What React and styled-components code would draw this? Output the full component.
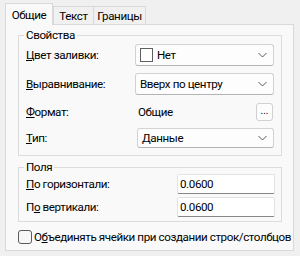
import React from "react";
import styled, { createGlobalStyle } from "styled-components";

const GlobalStyle = createGlobalStyle`
  html, body {
    margin: 0;
    padding: 0;
    background: #f0f0f0;
  }
  body {
    font-family: Roboto, "Liberation Sans", Arial, sans-serif;
    font-size: 11.6px;
    letter-spacing: -0.4px;
    color: #000;
  }
`;

const Window = styled.div`
  width: 300px;
  height: 256px;
  box-sizing: border-box;
  padding: 3px 6px 0 5px;
  background: #f0f0f0;
`;

const TabStrip = styled.div`
  display: flex;
  align-items: flex-end;
  height: 21px;
  position: relative;
  z-index: 1;
`;

const Tab = styled.div`
  box-sizing: border-box;
  width: ${(p) => p.$w}px;
  height: ${(p) => (p.$active ? 22 : 18)}px;
  margin-bottom: ${(p) => (p.$active ? -1 : 0)}px;
  margin-left: ${(p) => (p.$first ? 0 : -1)}px;
  display: flex;
  align-items: center;
  justify-content: center;
  padding-top: ${(p) => (p.$active ? 1 : 0)}px;
  border: 1px solid #d9d9d9;
  border-bottom: none;
  background: ${(p) => (p.$active ? "#f9f9f9" : "#f0f0f0")};
`;

const Panel = styled.div`
  box-sizing: border-box;
  width: 289px;
  height: 227px;
  border: 1px solid #d9d9d9;
  background: #f9f9f9;
  padding: 0 11px 0 12px;
  display: flex;
  flex-direction: column;
`;

const Group = styled.fieldset`
  margin: ${(p) => p.$top}px 0 0 0;
  border: 1px solid #dcdcdc;
  padding: ${(p) => p.$pad};
  min-width: 0;

  legend {
    padding: 0 2px;
    margin-left: -2px;
    line-height: 14px;
    height: 14px;
  }
`;

const Grid = styled.div`
  display: grid;
  grid-template-columns: ${(p) => p.$cols};
  row-gap: ${(p) => p.$gap}px;
  align-items: center;
`;

const Label = styled.div`
  height: ${(p) => p.$h}px;
  display: flex;
  align-items: center;
  white-space: nowrap;

  u {
    text-underline-offset: 1px;
  }
`;

const Combo = styled.div`
  box-sizing: border-box;
  height: ${(p) => p.$h}px;
  margin-left: ${(p) => p.$shift || 0}px;
  display: flex;
  align-items: center;
  padding: 0 6px 0 4px;
  gap: 4px;
  background: #fdfdfd;
  border: 1px solid #d2d2d2;
  border-bottom-color: #b4b4b4;
  border-radius: 3px;

  span {
    flex: 1;
    white-space: nowrap;
  }
`;

const Swatch = styled.div`
  box-sizing: border-box;
  flex-shrink: 0;
  width: 13px;
  height: 14px;
  border: 1px solid #5f5f5f;
  background: #fff;
`;

const FormatCell = styled.div`
  height: 19px;
  display: flex;
  align-items: center;
  justify-content: space-between;
  padding-left: 3px;
`;

const DotsButton = styled.div`
  box-sizing: border-box;
  width: 17px;
  height: 18px;
  margin-right: 1px;
  display: flex;
  align-items: center;
  justify-content: center;
  font-size: 10px;
  letter-spacing: 0;
  padding-bottom: 3px;
  background: #fdfdfd;
  border: 1px solid #d0d0d0;
  border-radius: 3px;
`;

const TextBox = styled.div`
  box-sizing: border-box;
  height: 20px;
  display: flex;
  align-items: center;
  padding: 0 3px 0 2px;
  background: #fff;
  border: 1px solid #e3e3e3;
  border-bottom: 1px solid #868686;
  border-radius: 2px;
`;

const CheckRow = styled.div`
  margin-top: 8px;
  display: flex;
  align-items: center;
  gap: 2px;
  white-space: nowrap;

  u {
    text-underline-offset: 1px;
  }
`;

const CheckBox = styled.div`
  box-sizing: border-box;
  flex-shrink: 0;
  width: 14px;
  height: 14px;
  border: 1px solid #5a5a5a;
  border-radius: 3px;
  background: #f7f7f7;
`;

const Chevron = () => (
  <svg width="9" height="6" viewBox="0 0 9 6">
    <path d="M0.5 1 L4.5 5 L8.5 1" fill="none" stroke="#5c5c5c" strokeWidth="1" />
  </svg>
);

const App = () => {
  return (
    <>
      <GlobalStyle />
      <Window>
        <TabStrip>
          <Tab $active $first $w={48}>Общие</Tab>
          <Tab $w={41} style={{ marginLeft: 0 }}>Текст</Tab>
          <Tab $w={53}>Границы</Tab>
        </TabStrip>
        <Panel>
          <Group $top={3} $pad="2px 7px 7px 7px">
            <legend>Свойства</legend>
            <Grid $cols="109px 139px" $gap={7}>
              <Label $h={22}>
                <span><u>Ц</u>вет заливки:</span>
              </Label>
              <Combo $h={22}>
                <Swatch />
                <span>Нет</span>
                <Chevron />
              </Combo>
              <Label $h={22}>
                <span><u>В</u>ыравнивание:</span>
              </Label>
              <Combo $h={22}>
                <span>Вверх по центру</span>
                <Chevron />
              </Combo>
              <Label $h={19}>
                <span><u>Ф</u>ормат:</span>
              </Label>
              <FormatCell>
                <span>Общие</span>
                <DotsButton>...</DotsButton>
              </FormatCell>
              <Label $h={20}>
                <span><u>Т</u>ип:</span>
              </Label>
              <Combo $h={20} $shift={2}>
                <span>Данные</span>
                <Chevron />
              </Combo>
            </Grid>
          </Group>
          <Group $top={4} $pad="0 6px 4px 7px">
            <legend>Поля</legend>
            <Grid $cols="151px 98px" $gap={3}>
              <Label $h={20}>
                <span><u>П</u>о горизонтали:</span>
              </Label>
              <TextBox>0.0600</TextBox>
              <Label $h={20}>
                <span>П<u>о</u> вертикали:</span>
              </Label>
              <TextBox>0.0600</TextBox>
            </Grid>
          </Group>
          <CheckRow>
            <CheckBox />
            <span>О<u>б</u>ъединять ячейки при создании строк/столбцов</span>
          </CheckRow>
        </Panel>
      </Window>
    </>
  );
};

export default App;
